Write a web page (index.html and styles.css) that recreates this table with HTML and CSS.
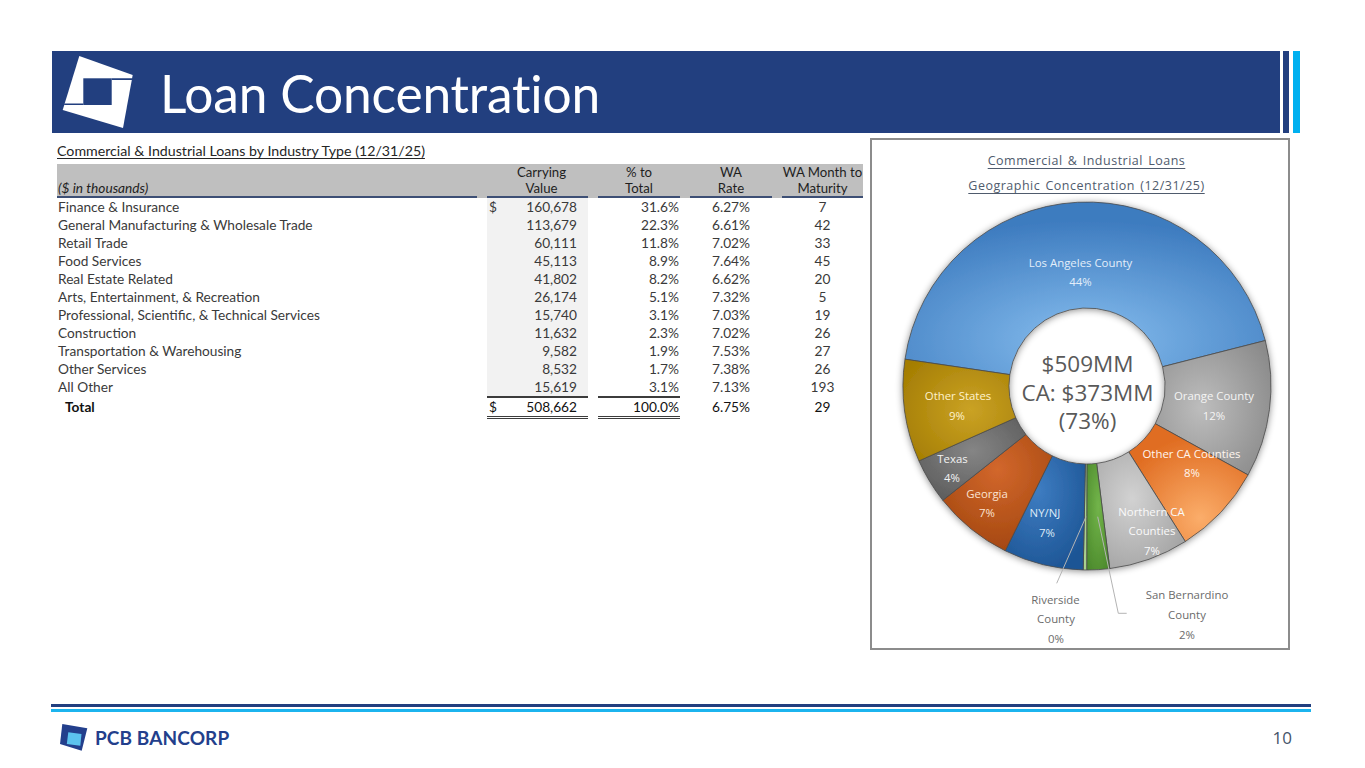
FILE: index.html
```html
<!DOCTYPE html>
<html lang="en">
<head>
<meta charset="utf-8">
<title>Loan Concentration</title>
<link rel="stylesheet" href="styles.css">
</head>
<body>
<div class="slide">
  <header class="top">
    <div class="bar">
      <svg class="bar-logo" viewBox="0 0 84 82" width="84" height="82" aria-hidden="true">
        <polygon points="27.3,5 80.7,24 71,77 10.7,59" fill="#ffffff"/>
        <rect x="31.3" y="27.3" width="28.4" height="26.7" fill="#223f7f"/>
        <polygon points="59.7,27.3 80.4,27.3 80.2,28.9 59.7,28.9" fill="#223f7f"/>
        <polygon points="12.4,52.4 31.3,52.4 31.3,54 12.1,54" fill="#223f7f"/>
      </svg>
      <h1 class="title">Loan Concentration</h1>
    </div>
    <div class="strip strip-dark"></div>
    <div class="strip strip-light"></div>
  </header>

  <main class="content">
    <section class="table-sec">
      <div class="caption">Commercial &amp; Industrial Loans by Industry Type (12/31/25)</div>
      <div class="tbl">
        <div class="row head">
          <div class="c lbl"><i>($ in thousands)</i></div>
          <div class="c hcv">Carrying<br>Value</div>
          <div class="c">% to<br>Total</div>
          <div class="c">WA<br>Rate</div>
          <div class="c">WA Month to<br>Maturity</div>
        </div>
        <div class="row"><div class="c lbl">Finance &amp; Insurance</div><div class="c cv"><span>$</span><span class="num">160,678</span></div><div class="c pct">31.6%</div><div class="c rate">6.27%</div><div class="c mon">7</div></div>
        <div class="row"><div class="c lbl">General Manufacturing &amp; Wholesale Trade</div><div class="c cv"><span class="num">113,679</span></div><div class="c pct">22.3%</div><div class="c rate">6.61%</div><div class="c mon">42</div></div>
        <div class="row"><div class="c lbl">Retail Trade</div><div class="c cv"><span class="num">60,111</span></div><div class="c pct">11.8%</div><div class="c rate">7.02%</div><div class="c mon">33</div></div>
        <div class="row"><div class="c lbl">Food Services</div><div class="c cv"><span class="num">45,113</span></div><div class="c pct">8.9%</div><div class="c rate">7.64%</div><div class="c mon">45</div></div>
        <div class="row"><div class="c lbl">Real Estate Related</div><div class="c cv"><span class="num">41,802</span></div><div class="c pct">8.2%</div><div class="c rate">6.62%</div><div class="c mon">20</div></div>
        <div class="row"><div class="c lbl">Arts, Entertainment, &amp; Recreation</div><div class="c cv"><span class="num">26,174</span></div><div class="c pct">5.1%</div><div class="c rate">7.32%</div><div class="c mon">5</div></div>
        <div class="row"><div class="c lbl">Professional, Scientific, &amp; Technical Services</div><div class="c cv"><span class="num">15,740</span></div><div class="c pct">3.1%</div><div class="c rate">7.03%</div><div class="c mon">19</div></div>
        <div class="row"><div class="c lbl">Construction</div><div class="c cv"><span class="num">11,632</span></div><div class="c pct">2.3%</div><div class="c rate">7.02%</div><div class="c mon">26</div></div>
        <div class="row"><div class="c lbl">Transportation &amp; Warehousing</div><div class="c cv"><span class="num">9,582</span></div><div class="c pct">1.9%</div><div class="c rate">7.53%</div><div class="c mon">27</div></div>
        <div class="row"><div class="c lbl">Other Services</div><div class="c cv"><span class="num">8,532</span></div><div class="c pct">1.7%</div><div class="c rate">7.38%</div><div class="c mon">26</div></div>
        <div class="row"><div class="c lbl">All Other</div><div class="c cv"><span class="num">15,619</span></div><div class="c pct">3.1%</div><div class="c rate">7.13%</div><div class="c mon">193</div></div>
        <div class="row total"><div class="c lbl">Total</div><div class="c cv"><span>$</span><span class="num">508,662</span></div><div class="c pct">100.0%</div><div class="c rate">6.75%</div><div class="c mon">29</div></div>
      </div>
    </section>

    <section class="chart">
      <div class="ctitle">
        <span>Commercial &amp; Industrial Loans</span>
        <span>Geographic Concentration (12/31/25)</span>
      </div>
      <svg class="donut" viewBox="872 140 416 508" width="416" height="508">
        <defs>
          <filter id="sh" x="-20%" y="-20%" width="140%" height="140%">
            <feDropShadow dx="0" dy="1" stdDeviation="3.5" flood-color="#000" flood-opacity="0.45"/>
          </filter>
          <radialGradient id="gLA" cx="50%" cy="80%" r="70%"><stop offset="0" stop-color="#86bdee"/><stop offset="1" stop-color="#3d7bbf"/></radialGradient>
          <radialGradient id="gOC" cx="40%" cy="50%" r="70%"><stop offset="0" stop-color="#bdbdbd"/><stop offset="1" stop-color="#8a8a8a"/></radialGradient>
          <radialGradient id="gOCA" cx="60%" cy="80%" r="70%"><stop offset="0" stop-color="#fbad6a"/><stop offset="1" stop-color="#e06d22"/></radialGradient>
          <radialGradient id="gNCA" cx="40%" cy="40%" r="70%"><stop offset="0" stop-color="#d2d2d2"/><stop offset="1" stop-color="#a3a3a3"/></radialGradient>
          <radialGradient id="gSB" cx="50%" cy="40%" r="70%"><stop offset="0" stop-color="#72b44a"/><stop offset="1" stop-color="#4c8a2c"/></radialGradient>
          <radialGradient id="gNY" cx="40%" cy="30%" r="75%"><stop offset="0" stop-color="#3e7dc2"/><stop offset="1" stop-color="#1d5595"/></radialGradient>
          <radialGradient id="gGA" cx="50%" cy="30%" r="75%"><stop offset="0" stop-color="#d2672c"/><stop offset="1" stop-color="#a2460e"/></radialGradient>
          <radialGradient id="gTX" cx="50%" cy="40%" r="70%"><stop offset="0" stop-color="#858585"/><stop offset="1" stop-color="#5a5a5a"/></radialGradient>
          <radialGradient id="gOS" cx="60%" cy="50%" r="70%"><stop offset="0" stop-color="#caa225"/><stop offset="1" stop-color="#a47d02"/></radialGradient>
        </defs>
        <g transform="translate(878,140)" filter="url(#sh)" stroke="#4a4a4a" stroke-width="0.8" stroke-linejoin="round">
          <path fill="url(#gLA)" d="M26.97,219.18 A184,184 0 0 1 387.30,200.55 L284.58,226.73 A78,78 0 0 0 131.83,234.63 Z"/>
          <path fill="url(#gOC)" d="M387.30,200.55 A184,184 0 0 1 370.06,334.92 L277.27,283.70 A78,78 0 0 0 284.58,226.73 Z"/>
          <path fill="url(#gOCA)" d="M370.06,334.92 A184,184 0 0 1 307.32,401.53 L250.68,311.93 A78,78 0 0 0 277.27,283.70 Z"/>
          <path fill="url(#gNCA)" d="M307.32,401.53 A184,184 0 0 1 231.74,428.59 L218.64,323.40 A78,78 0 0 0 250.68,311.93 Z"/>
          <path fill="url(#gSB)" d="M231.74,428.59 A184,184 0 0 1 208.68,430 L208.86,324 A78,78 0 0 0 218.64,323.40 Z"/>
          <path fill="#a9d18e" d="M208.68,430 A184,184 0 0 1 205.21,429.96 L207.39,323.98 A78,78 0 0 0 208.86,324 Z"/>
          <path fill="url(#gNY)" d="M205.21,429.96 A184,184 0 0 1 127.24,410.84 L174.34,315.88 A78,78 0 0 0 207.39,323.98 Z"/>
          <path fill="url(#gGA)" d="M127.24,410.84 A184,184 0 0 1 64.81,360.31 L147.88,294.46 A78,78 0 0 0 174.34,315.88 Z"/>
          <path fill="url(#gTX)" d="M64.81,360.31 A184,184 0 0 1 40.93,320.90 L137.75,277.75 A78,78 0 0 0 147.88,294.46 Z"/>
          <path fill="url(#gOS)" d="M40.93,320.90 A184,184 0 0 1 26.97,219.18 L131.83,234.63 A78,78 0 0 0 137.75,277.75 Z"/>
        </g>
        <g class="lead" fill="none" stroke="#b4b4b4" stroke-width="1">
          <polyline points="1056.7,583.3 1086,516.7"/>
          <polyline points="1097.7,516.7 1118.3,613.3 1126.7,613.3"/>
        </g>
        <g class="lbl-in" text-anchor="middle">
          <text x="1080.5" y="267" fill="#e3eefa">Los Angeles County</text>
          <text x="1080.5" y="286" fill="#e3eefa">44%</text>
          <text x="1214" y="400" fill="#f4f4f4">Orange County</text>
          <text x="1214" y="420" fill="#f4f4f4">12%</text>
          <text x="1191.5" y="458" fill="#fff6ee">Other CA Counties</text>
          <text x="1192" y="477" fill="#fff6ee">8%</text>
          <text x="1151.5" y="516" fill="#fafafa">Northern CA</text>
          <text x="1152" y="535" fill="#fafafa">Counties</text>
          <text x="1152" y="555" fill="#fafafa">7%</text>
          <text x="1045" y="517" fill="#deebf7">NY/NJ</text>
          <text x="1047" y="537" fill="#deebf7">7%</text>
          <text x="987" y="498" fill="#fbe3d2">Georgia</text>
          <text x="987" y="517" fill="#fbe3d2">7%</text>
          <text x="952.5" y="463" fill="#f2f2f2">Texas</text>
          <text x="952" y="482" fill="#f2f2f2">4%</text>
          <text x="958" y="400" fill="#fff2cc">Other States</text>
          <text x="957" y="420" fill="#fff2cc">9%</text>
        </g>
        <g class="lbl-out" text-anchor="middle" fill="#6b6b6b">
          <text x="1055.5" y="604">Riverside</text>
          <text x="1056" y="623">County</text>
          <text x="1056" y="643">0%</text>
          <text x="1187" y="599">San Bernardino</text>
          <text x="1187" y="619">County</text>
          <text x="1187" y="639">2%</text>
        </g>
        <g class="center" text-anchor="middle" fill="#595959">
          <text x="1087.5" y="372">$509MM</text>
          <text x="1087.5" y="400.5">CA: $373MM</text>
          <text x="1087.5" y="429">(73%)</text>
        </g>
      </svg>
    </section>
  </main>

  <footer class="foot">
    <div class="rule rule-dark"></div>
    <div class="rule rule-light"></div>
    <div class="foot-row">
      <div class="brand">
        <svg class="brand-logo" viewBox="0 0 28 29" width="28" height="29" aria-hidden="true">
          <polygon points="2.3,1 27.3,5.3 21.7,27.7 0,21" fill="#233f8c"/>
          <polygon points="8.3,9.3 21.5,11 20.3,22.8 6.8,21" fill="#5cc3ee"/>
        </svg>
        <span class="brand-name">PCB BANCORP</span>
      </div>
      <div class="pg">10</div>
    </div>
  </footer>
</div>
</body>
</html>
```

FILE: styles.css
```css
* { box-sizing: border-box; }
html, body { margin: 0; padding: 0; }
body {
  width: 1365px;
  height: 768px;
  overflow: hidden;
  background: #ffffff;
  font-family: "Lato", "Open Sans", sans-serif;
}
.slide {
  width: 1365px;
  height: 768px;
  display: flex;
  flex-direction: column;
}

/* header */
.top {
  display: flex;
  margin-top: 51px;
  height: 82px;
  padding-left: 52px;
}
.bar {
  width: 1228px;
  height: 82px;
  background: #223f7f;
  display: flex;
  align-items: center;
}
.bar-logo { flex: none; display: block; }
.title {
  margin: 2px 0 0 24px;
  font-family: "Lato", sans-serif;
  font-weight: 400;
  font-size: 51.5px;
  line-height: 60px;
  color: #ffffff;
  letter-spacing: -0.2px;
}
.strip { height: 82px; flex: none; }
.strip-dark { width: 6px; margin-left: 3px; background: #223f7f; }
.strip-light { width: 7px; margin-left: 4px; background: #00b0f0; }

/* content */
.content {
  display: flex;
  margin-top: 5px;
  height: 512px;
  padding-left: 57px;
}
.table-sec { width: 806px; flex: none; }
.caption {
  height: 26px;
  padding-top: 4px;
  font-size: 14.2px;
  line-height: 17px;
  color: #262626;
  text-decoration: underline;
  text-underline-offset: 2px;
}
.row {
  display: grid;
  grid-template-columns: 420px 101px 82px 82px 81px;
  column-gap: 10px;
  height: 18px;
  font-size: 13.7px;
  line-height: 18px;
  color: #3a3a3a;
}
.c { white-space: nowrap; }
.lbl { padding-left: 1px; }
.head {
  height: 34px;
  background: #bfbfbf;
  color: #1e1e1e;
  font-size: 13.2px;
}
.head .c {
  display: flex;
  flex-direction: column;
  justify-content: flex-end;
  align-items: center;
  text-align: center;
  line-height: 16px;
  border-bottom: 2px solid #3d4f75;
}
.head .lbl { align-items: flex-start; text-align: left; font-size: 13.7px; }
.head .hcv { padding-left: 8px; }
.cv {
  display: flex;
  background: #f2f2f2;
  padding: 0 11px 0 2px;
}
.cv .num { margin-left: auto; }
.pct { text-align: right; padding-right: 1px; }
.rate, .mon { text-align: center; }
.total { height: auto; color: #111111; }
.total .c { border-top: 2px solid transparent; }
.total .lbl { padding-left: 8px; font-weight: 700; }
.total .cv, .total .pct {
  background: none;
  border-top-color: #3c3c3c;
  border-bottom: 3px double #3c3c3c;
}

/* chart */
.chart {
  position: relative;
  flex: none;
  width: 420px;
  height: 512px;
  margin-left: 7px;
  border: 2px solid #8c8c8c;
}
.ctitle {
  display: flex;
  flex-direction: column;
  align-items: center;
  padding-top: 8px;
  padding-left: 13px;
  font-family: "Open Sans", sans-serif;
  font-size: 12.5px;
  line-height: 25px;
  letter-spacing: 0.5px;
  word-spacing: 1.5px;
  color: #4f5b6d;
}
.ctitle span { text-decoration: underline; text-underline-offset: 3px; }
.donut {
  position: absolute;
  left: 0;
  top: 0;
}
.donut text { font-family: "Open Sans", sans-serif; font-size: 11.4px; }
.donut .center text { font-size: 22.5px; }

/* footer */
.foot {
  margin-top: 54px;
  padding-left: 51px;
}
.rule { width: 1260px; height: 3px; }
.rule-dark { background: #223f7f; }
.rule-light { margin-top: 2px; background: #1cb4ee; }
.foot-row {
  display: flex;
  align-items: center;
  justify-content: space-between;
  width: 1241px;
  height: 30px;
  margin-top: 10px;
  padding-left: 9px;
}
.brand { display: flex; align-items: center; }
.brand-logo { display: block; }
.brand-name {
  margin-left: 7px;
  font-family: "Lato", sans-serif;
  font-weight: 700;
  font-size: 19px;
  letter-spacing: 0.1px;
  color: #233f8c;
}
.pg {
  font-family: "Open Sans", sans-serif;
  font-size: 17px;
  color: #44546a;
}
```
